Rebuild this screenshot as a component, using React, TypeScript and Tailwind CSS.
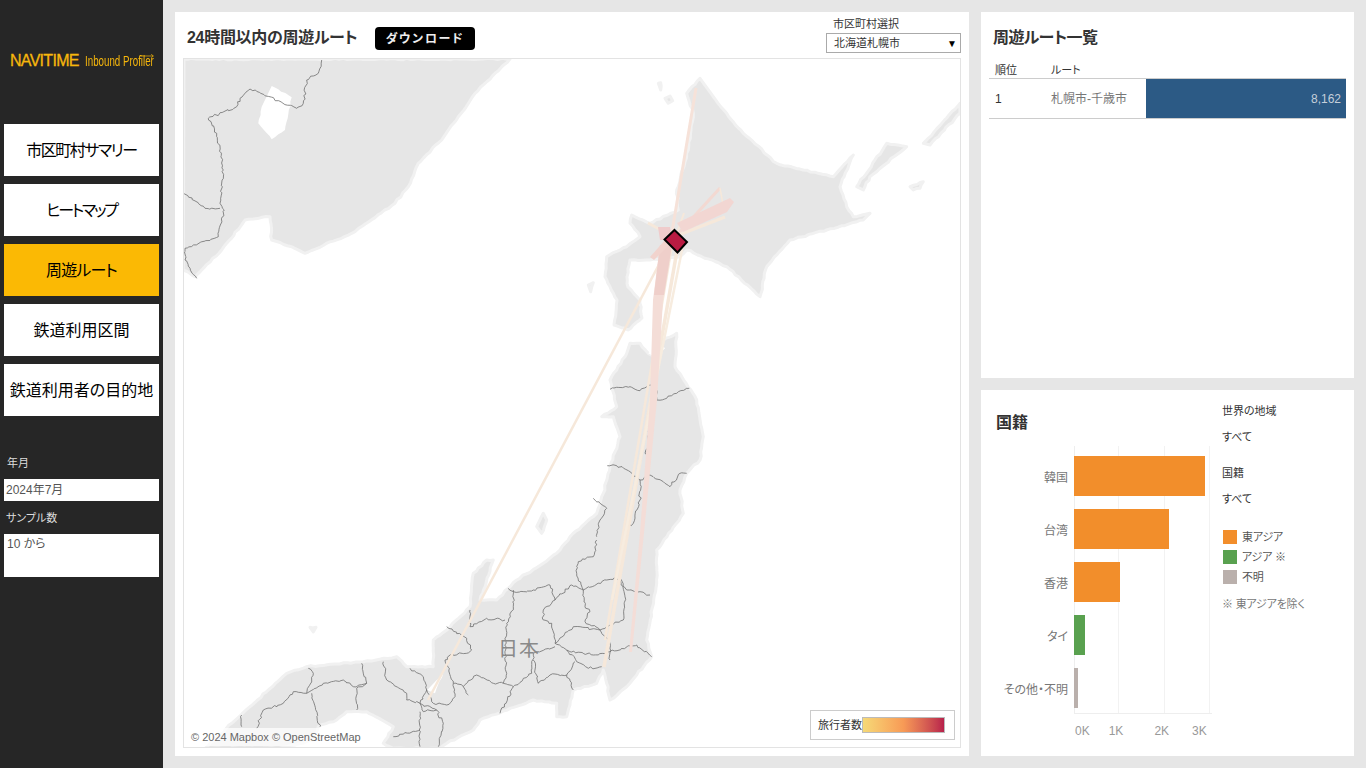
import React from "react";

type Pts = number[];

// the zooms were read at 3x, so these turn crop coordinates back into page ones
const from = (ox: number, oy: number, z: Pts): Pts =>
  z.map((v, i) => (i % 2 === 0 ? ox + v / 3 : oy + v / 3));
const a = (z: Pts) => from(175, 10, z);
const b = (z: Pts) => from(570, 10, z);
const c = (z: Pts) => from(400, 300, z);
const d = (z: Pts) => from(180, 540, z);

const str = (p: Pts) => {
  const out: string[] = [];
  for (let i = 0; i < p.length; i += 2) out.push(`${p[i].toFixed(1)},${p[i + 1].toFixed(1)}`);
  return out.join(" ");
};

// borders are wiggly in the map, so break each segment up a little
const jag = (p: Pts, amount = 1.2, step = 2.5) => {
  const out: Pts = [];
  let seed = Math.round(p[0] * 7 + p[1] * 13);
  const rnd = () => {
    seed = (seed * 9301 + 49297) % 233280;
    return seed / 233280 - 0.5;
  };
  for (let i = 0; i < p.length - 2; i += 2) {
    const dx = p[i + 2] - p[i];
    const dy = p[i + 3] - p[i + 1];
    const n = Math.max(1, Math.round(Math.hypot(dx, dy) / step));
    for (let k = 0; k < n; k++) {
      const j = k === 0 ? 0 : amount;
      out.push(p[i] + (dx * k) / n + rnd() * 2 * j, p[i + 1] + (dy * k) / n + rnd() * 2 * j);
    }
  }
  out.push(p[p.length - 2], p[p.length - 1]);
  return out;
};

const land: Pts[] = [
  // russia
  [184, 59, 510, 59, ...a([900, 250, 850, 320, 800, 390, 730, 460, 700, 530, 660, 580, 530, 670, 390, 730, 350, 710, 290, 690, 285, 620, 210, 630, 140, 720, 60, 800, 25, 780])],
  // hokkaido with the oshima peninsula
  b([390, 205, 350, 250, 370, 310, 355, 420, 320, 540, 325, 600, 240, 640, 185, 615, 180, 640, 210, 680, 170, 710, 110, 740, 105, 800, 141, 870, 132, 945, 174, 960, 216, 924, 210, 870, 174, 831, 171, 801, 180, 750, 240, 750, 290, 745, 330, 740, 350, 720, 470, 770, 570, 860, 590, 770, 660, 690, 770, 660, 880, 630, 900, 610, 850, 620, 830, 590, 810, 530, 850, 435, 790, 500, 700, 480, 620, 460, 520, 370, 470, 310, 430, 260]),
  // kurils and small islands
  b([860, 530, 950, 400, 1010, 410, 900, 500, 880, 540]),
  b([1060, 400, 1170, 280, 1170, 310, 1080, 405]),
  b([1020, 530, 1060, 515, 1050, 535, 1030, 540]),
  b([285, 265, 300, 258, 308, 272, 295, 280]),
  b([265, 220, 272, 218, 272, 240]),
  b([55, 825, 70, 818, 62, 845]),
  d([390, 262, 408, 262, 400, 276]),
  // honshu
  [
    ...c([690, 130, 720, 130, 745, 160, 770, 175, 780, 125, 830, 100, 825, 200, 890, 300, 910, 410, 900, 480, 860, 520, 840, 570, 850, 640]),
    ...d([1430, 30, 1430, 130, 1400, 300, 1415, 350, 1340, 440, 1290, 480, 1280, 430, 1270, 390, 1250, 430, 1180, 450, 1160, 530, 1130, 530, 1130, 490, 1060, 480, 900, 540, 880, 570, 800, 610, 780, 625, 640, 625, 610, 610, 640, 560, 560, 515, 500, 515, 470, 540, 415, 560, 400, 600, 300, 625, 75, 625, 155, 550, 320, 400, 380, 380, 550, 365, 650, 350, 680, 380, 760, 380, 760, 300, 800, 270, 870, 200, 880, 100, 920, 60, 940, 60, 900, 180, 950, 180, 1010, 120, 1090, 70, 1140, 30]),
    ...c([510, 710, 590, 640, 610, 580, 630, 500, 660, 410, 640, 350, 605, 350, 650, 320, 630, 240, 680, 160]),
  ],
  // sado
  c([430, 640, 410, 680, 425, 700, 440, 660]),
];

const holes: Pts[] = [
  // lake khanka
  a([290, 228, 350, 262, 330, 360, 290, 388, 250, 340, 260, 290]),
  // osaka bay
  d([770, 420, 790, 400, 765, 460, 742, 450]),
  // mutsu bay
  c([745, 160, 770, 175, 795, 145, 775, 130]),
];

const borders: Pts[] = [
  a([440, 150, 430, 190, 395, 210, 385, 280, 365, 295, 225, 237, 195, 265, 185, 290, 100, 325, 125, 370, 145, 480, 135, 580, 148, 600, 130, 680, 30, 715, 30, 750, 65, 805]),
  a([25, 550, 90, 595, 135, 595]),
  c([630, 268, 650, 262, 690, 260, 720, 272, 750, 255, 770, 270, 770, 300, 800, 295, 830, 280, 868, 265]),
  c([750, 370, 745, 420, 735, 460, 750, 480]),
  c([622, 497, 650, 497, 690, 515, 720, 540, 750, 525, 790, 545, 810, 560, 840, 520, 860, 520]),
  c([720, 540, 720, 600, 700, 670, 680, 680, 680, 720]),
  c([580, 595, 620, 625, 600, 660, 590, 710]),
  d([1250, 0, 1240, 50, 1195, 65, 1190, 100, 1210, 150, 1280, 120, 1320, 115, 1340, 150, 1380, 155, 1410, 165]),
  d([1210, 150, 1215, 200, 1230, 215, 1215, 245, 1260, 270, 1330, 240, 1335, 170, 1320, 120]),
  d([1000, 150, 1000, 200, 980, 250, 975, 340, 980, 400, 970, 430, 1000, 440, 960, 520]),
  d([985, 145, 1000, 155, 1060, 150, 1110, 135, 1125, 180, 1175, 135, 1210, 150]),
  d([1125, 180, 1090, 210, 1090, 240, 1115, 250, 1125, 310, 1180, 260, 1260, 270, 1290, 310, 1290, 360]),
  d([1125, 310, 1160, 330, 1240, 345, 1290, 335, 1370, 315, 1415, 350]),
  d([1160, 330, 1190, 365, 1225, 385, 1265, 380]),
  d([1125, 320, 1060, 340, 1055, 400, 1000, 440]),
  d([1060, 360, 1075, 430, 1110, 405, 1160, 405, 1185, 365]),
  d([1160, 405, 1180, 450]),
  d([870, 210, 870, 260, 920, 235, 975, 240]),
  d([800, 260, 860, 295, 875, 330, 860, 340, 810, 345, 795, 360]),
  d([795, 360, 820, 430, 850, 440, 865, 465]),
  d([850, 440, 890, 405, 940, 430, 970, 430]),
  d([820, 430, 825, 470, 800, 495, 760, 490, 740, 450, 720, 490, 770, 510, 790, 550, 775, 620]),
  d([770, 510, 730, 515, 720, 490]),
  d([720, 570, 640, 590]),
  d([720, 515, 720, 620]),
  d([610, 365, 620, 420, 680, 460, 680, 480, 720, 490]),
  d([690, 385, 730, 410, 740, 450]),
  d([545, 370, 560, 430, 530, 445, 530, 510]),
  d([385, 385, 400, 400, 380, 460, 340, 455, 310, 490, 250, 510, 230, 565]),
  d([380, 460, 430, 430, 490, 420, 520, 440, 560, 430]),
  d([395, 460, 420, 560]),
  d([185, 525, 185, 560]),
];

const TAN = "#f6e8da";

const routes: { p: Pts; w: number; color: string }[] = [
  { p: [672, 232, 696, 88], w: 3, color: "#f6e2d9" },
  { p: [676, 236, 720, 188], w: 3, color: "#f3d9d2" },
  { p: [676, 236, 725, 217], w: 3, color: TAN },
  { p: [676, 238, 648, 223], w: 3, color: TAN },
  { p: [676, 236, 684, 213], w: 2, color: TAN },
  { p: [720, 188, 724, 210], w: 1.5, color: TAN },
  { p: [672, 240, 428, 700], w: 2.5, color: TAN },
  { p: [678, 245, 604, 667], w: 3.5, color: TAN },
  { p: [672, 245, 605, 640], w: 2.5, color: TAN },
  { p: [684, 240, 612, 600], w: 2.5, color: "#f7ecdf" },
];

const NAV = [
  { label: "市区町村サマリー", tracking: "tracking-[-1.5px]" },
  { label: "ヒートマップ", tracking: "tracking-[-2.3px]" },
  { label: "周遊ルート", tracking: "tracking-[-0.8px]" },
  { label: "鉄道利用区間", tracking: "tracking-normal" },
  { label: "鉄道利用者の目的地", tracking: "tracking-normal" },
];

const BARS = [
  { label: "韓国", w: "w-[131px]", color: "bg-[#f28e2b]" },
  { label: "台湾", w: "w-[95px]", color: "bg-[#f28e2b]" },
  { label: "香港", w: "w-[46px]", color: "bg-[#f28e2b]" },
  { label: "タイ", w: "w-[11px]", color: "bg-[#59a14f]" },
  { label: "その他・不明", w: "w-[4px]", color: "bg-[#bab0ac]" },
];

const LEGEND = [
  { label: "東アジア", color: "bg-[#f28e2b]" },
  { label: "アジア ※", color: "bg-[#59a14f]" },
  { label: "不明", color: "bg-[#bab0ac]" },
];

function MapView() {
  return (
    <svg viewBox="184 59 776 688" className="block h-full w-full">
      <defs>
        <filter id="soft" x="-5%" y="-5%" width="110%" height="110%">
          <feGaussianBlur stdDeviation="0.6" />
        </filter>
      </defs>
      <g filter="url(#soft)">
        {land.map((p, i) => (
          <polygon key={i} points={str(jag(p, 0.7, 4))} fill="#e6e6e6" stroke="#f1f1f1" strokeWidth="3" strokeLinejoin="round" />
        ))}
        {holes.map((p, i) => (
          <polygon key={i} points={str(jag(p, 0.7, 4))} fill="#ffffff" />
        ))}
      </g>
      <g fill="none" stroke="#6e6e6e" strokeWidth="0.8" strokeLinejoin="round">
        {borders.map((p, i) => (
          <polyline key={i} points={str(jag(p))} />
        ))}
      </g>
      <g>
        {routes.map((r, i) => (
          <line key={i} x1={r.p[0]} y1={r.p[1]} x2={r.p[2]} y2={r.p[3]} stroke={r.color} strokeWidth={r.w} />
        ))}
        <polygon points="660,245 672,245 663,300 657,400 644,533 632,652 629,652 640,533 650,400 653,300" fill="#f4ddd7" />
        <polygon points="660,245 672,245 664,295 654,295" fill="#efcfca" />
        <polygon points="677,223 730,198 734,202 727,212 683,232" fill="#f2d6d2" />
        <polygon points="658,227 670,227 672,240 660,240" fill="#efcbcb" />
        <polygon points="650,257 654,260 680,234 674,230" fill="#f1d3cd" />
      </g>
      <polygon points="674.500,230 687,242 677.500,252.500 664.500,239.500" fill="#b91b42" stroke="#000000" strokeWidth="2" />
      <text x="498" y="656" fontSize="20" fill="#8a8a8a" fontFamily="'Noto Sans CJK JP', sans-serif" letterSpacing="1">
        日本
      </text>
    </svg>
  );
}

export default function App() {
  return (
    <div className="flex h-screen w-full overflow-hidden bg-[#e6e6e6] font-['Liberation_Sans','Noto_Sans_CJK_JP',sans-serif] [font-feature-settings:'palt']">
      {/* Sidebar */}
      <aside className="w-[163px] shrink-0 bg-[#262626] px-1">
        <div className="relative flex h-[124px] items-start whitespace-nowrap pt-[51px] pl-[6px] text-[#f7b70c]">
          <span className="text-[16px] leading-5 tracking-[-0.7px] [-webkit-text-stroke:0.3px_#f7b70c]">NAVITIME</span>
          <span className="ml-[6px] origin-left scale-x-[0.65] text-[15px] leading-5">Inbound Profiler</span>
          <svg viewBox="0 0 20 6" className="absolute left-[136px] top-[53px] h-[6px] w-[14px]">
            <path d="M0 3H19M16 0.500L19 3L16 5.500" fill="none" stroke="#f7b70c" strokeWidth="1" />
          </svg>
        </div>
        <nav className="flex flex-col gap-2">
          {NAV.map((item) => (
            <div
              key={item.label}
              className={`flex h-[52px] items-center justify-center pt-[2px] text-[16px] text-black ${item.tracking} ${
                item.label === "周遊ルート" ? "bg-[#fbb904]" : "bg-white"
              }`}
            >
              {item.label}
            </div>
          ))}
        </nav>
        <div className="mt-[39px] pl-[3px] text-[11px] leading-4 text-[#dddddd]">年月</div>
        <div className="mt-[8px] flex h-[22px] items-center bg-white pl-[2px] text-[12px] text-[#555555]">2024年7月</div>
        <div className="mt-[9px] pl-[2px] text-[11px] leading-4 text-[#dddddd]">サンプル数</div>
        <div className="mt-[8px] h-[43px] bg-white pl-[3px] pt-[2px] text-[12px] leading-4 text-[#555555]">10 から</div>
      </aside>

      <main className="flex min-w-0 flex-1 gap-3 p-3">
        {/* Map panel */}
        <section className="flex w-[794px] shrink-0 flex-col bg-white px-2">
          <header className="flex h-[46px] shrink-0 items-start">
            <h1 className="ml-1 mt-[16px] w-[188px] whitespace-nowrap text-[16px] font-bold leading-5 tracking-[-0.3px] text-[#333333]">24時間以内の周遊ルート</h1>
            <button className="mt-[15px] h-[23px] w-[100px] rounded bg-black text-[12px] font-bold tracking-[1.7px] text-[#eeeeee]">
              ダウンロード
            </button>
            <div className="ml-auto w-[135px]">
              <div className="mt-[5px] pl-[7px] text-[11px] leading-[14px] text-[#333333]">市区町村選択</div>
              <div className="mt-[2px] flex h-[20px] items-center justify-between border border-[#aaaaaa] pl-[7px] pr-[3px] text-[11px] text-[#333333]">
                <span>北海道札幌市</span>
                <span className="text-[10px] text-black">▼</span>
              </div>
            </div>
          </header>
          <div className="relative h-[690px] border border-[#e3e3e3]">
            <MapView />
            <div className="absolute bottom-px left-[3px] bg-white/70 px-1 text-[11px] leading-[18px] text-[#666666]">
              © 2024 Mapbox © OpenStreetMap
            </div>
            <div className="absolute bottom-[7px] right-[5px] flex h-[30px] w-[145px] items-center border border-[#cccccc] bg-white pl-[7px] text-[11px] text-[#333333]">
              <span className="w-[44px] whitespace-nowrap">旅行者数</span>
              <span className="h-[16px] w-[83px] border border-[#bbbbbb] bg-gradient-to-r from-[#f5d977] via-[#f79a56] to-[#b81f4b]" />
            </div>
          </div>
        </section>

        {/* Right column */}
        <div className="flex min-w-0 flex-1 flex-col gap-3">
          <section className="h-[366px] bg-white px-2">
            <h2 className="ml-1 pt-[16px] text-[16px] font-bold leading-5 tracking-[-0.6px] text-[#333333]">周遊ルート一覧</h2>
            <div className="mt-[16px] flex h-[15px] items-center border-b border-[#cccccc] pb-[1px] text-[11px] text-[#333333]">
              <span className="ml-[6px] w-[56px]">順位</span>
              <span>ルート</span>
            </div>
            <div className="flex h-[40px] items-stretch border-b border-[#cccccc] text-[12px]">
              <span className="ml-[6px] flex w-[56px] items-center text-[#333333]">1</span>
              <span className="flex w-[95px] items-center text-[#777777]">札幌市-千歳市</span>
              <span className="flex w-[200px] items-center justify-end bg-[#2c5a85] pr-[5px] text-[#c5cfda]">8,162</span>
            </div>
          </section>

          <section className="flex h-[366px] bg-white">
            <div className="w-[241px] shrink-0 pl-[15px]">
              <h2 className="pt-[23px] text-[16px] font-bold leading-5 text-[#333333]">国籍</h2>
              <div className="mt-[13px] flex">
                <div className="flex w-[78px] shrink-0 flex-col gap-[13px] pt-[12px]">
                  {BARS.map((bar) => (
                    <div key={bar.label} className="flex h-[40px] items-center justify-end pr-[6px] text-[12px] whitespace-nowrap text-[#777777]">
                      {bar.label}
                    </div>
                  ))}
                </div>
                <div className="flex-1">
                  <div className="relative h-[268px] w-[138px] border-b border-[#eeeeee]">
                    <div className="absolute inset-y-0 left-0 h-full w-px bg-[#eeeeee]" />
                    <div className="absolute inset-y-0 left-[44px] h-full w-px bg-[#f2f2f2]" />
                    <div className="absolute inset-y-0 left-[90px] h-full w-px bg-[#f2f2f2]" />
                    <div className="absolute inset-y-0 left-[135px] h-full w-px bg-[#f2f2f2]" />
                    <div className="relative flex flex-col gap-[13px] pt-[10px]">
                      {BARS.map((bar) => (
                        <div key={bar.label} className={`h-[40px] ${bar.w} ${bar.color}`} />
                      ))}
                    </div>
                  </div>
                  <div className="mt-[9px] flex pl-px text-[12px] leading-4 text-[#999999]">
                    <span>0K</span>
                    <span className="ml-[19px]">1K</span>
                    <span className="ml-[31px]">2K</span>
                    <span className="ml-[23px]">3K</span>
                  </div>
                </div>
              </div>
            </div>
            <div className="text-[11px] text-[#333333]">
              <div className="mt-[13px] leading-4">世界の地域</div>
              <div className="mt-[10px] leading-4">すべて</div>
              <div className="mt-[20px] leading-4">国籍</div>
              <div className="mt-[10px] leading-4">すべて</div>
              <div className="mt-[23px] flex flex-col gap-[6px] pl-px tracking-[-0.2px]">
                {LEGEND.map((item) => (
                  <div key={item.label} className="flex h-[14px] items-center gap-[5px] text-[#555555]">
                    <span className={`h-[14px] w-[14px] ${item.color}`} />
                    <span>{item.label}</span>
                  </div>
                ))}
              </div>
              <div className="mt-[12px] leading-4 tracking-[-0.2px] text-[#777777]">※ 東アジアを除く</div>
            </div>
          </section>
        </div>
      </main>
    </div>
  );
}
